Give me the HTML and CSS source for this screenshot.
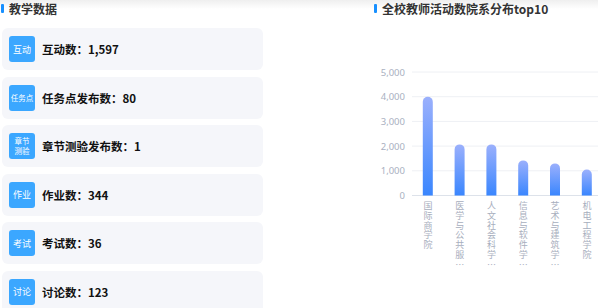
FILE: index.html
```html
<!DOCTYPE html>
<html lang="zh-CN">

<head>
    <meta charset="UTF-8">
    <meta name="viewport" content="width=device-width, initial-scale=1.0">
    <title>教学数据</title>
    <link rel="stylesheet" href="styles.css">
</head>

<body>
    <div class="page">
        <!-- 教学数据 -->
        <div class="left-panel">
            <div class="panel-title">教学数据</div>
            <div class="stat-list">
                <div class="stat-card">
                    <div class="stat-icon">互动</div>
                    <div class="stat-label">互动数：1,597</div>
                </div>
                <div class="stat-card">
                    <div class="stat-icon small">任务点</div>
                    <div class="stat-label">任务点发布数：80</div>
                </div>
                <div class="stat-card">
                    <div class="stat-icon two-line">章节<br>测验</div>
                    <div class="stat-label">章节测验发布数：1</div>
                </div>
                <div class="stat-card">
                    <div class="stat-icon">作业</div>
                    <div class="stat-label">作业数：344</div>
                </div>
                <div class="stat-card">
                    <div class="stat-icon">考试</div>
                    <div class="stat-label">考试数：36</div>
                </div>
                <div class="stat-card">
                    <div class="stat-icon">讨论</div>
                    <div class="stat-label">讨论数：123</div>
                </div>
            </div>
        </div>

        <!-- 院系分布 -->
        <div class="right-panel">
            <div class="panel-title">全校教师活动数院系分布top10</div>
            <svg class="chart" width="240" height="181" viewBox="0 0 240 181">
                <defs>
                    <linearGradient id="barFill" x1="0" y1="0" x2="0" y2="1">
                        <stop offset="0" stop-color="#9bb0fc"/>
                        <stop offset="1" stop-color="#3a86fe"/>
                    </linearGradient>
                </defs>
                <g class="grid">
                    <line x1="40" y1="52" x2="240" y2="52"/>
                    <line x1="40" y1="76.7" x2="240" y2="76.7"/>
                    <line x1="40" y1="101.4" x2="240" y2="101.4"/>
                    <line x1="40" y1="126.1" x2="240" y2="126.1"/>
                    <line x1="40" y1="150.8" x2="240" y2="150.8"/>
                </g>
                <line class="axis" x1="40" y1="175.5" x2="240" y2="175.5"/>
                <g class="y-labels">
                    <text x="33" y="55.5">5,000</text>
                    <text x="33" y="80.2">4,000</text>
                    <text x="33" y="104.9">3,000</text>
                    <text x="33" y="129.6">2,000</text>
                    <text x="33" y="154.3">1,000</text>
                    <text x="33" y="179">0</text>
                </g>
                <g class="bars">
                    <path d="M50.8 175.5 V81.7 A5 5 0 0 1 60.8 81.7 V175.5 Z"/>
                    <path d="M82.6 175.5 V129.4 A5 5 0 0 1 92.6 129.4 V175.5 Z"/>
                    <path d="M114.4 175.5 V129.4 A5 5 0 0 1 124.4 129.4 V175.5 Z"/>
                    <path d="M146.2 175.5 V145.4 A5 5 0 0 1 156.2 145.4 V175.5 Z"/>
                    <path d="M178 175.5 V148.4 A5 5 0 0 1 188 148.4 V175.5 Z"/>
                    <path d="M209.8 175.5 V154.6 A5 5 0 0 1 219.8 154.6 V175.5 Z"/>
                </g>
            </svg>
            <div class="x-labels">
                <div class="x-label"><span>国</span><span>际</span><span>商</span><span>学</span><span>院</span></div>
                <div class="x-label"><span>医</span><span>学</span><span>与</span><span>公</span><span>共</span><span>服</span><span>…</span></div>
                <div class="x-label"><span>人</span><span>文</span><span>社</span><span>会</span><span>科</span><span>学</span><span>…</span></div>
                <div class="x-label"><span>信</span><span>息</span><span>与</span><span>软</span><span>件</span><span>学</span><span>…</span></div>
                <div class="x-label"><span>艺</span><span>术</span><span>与</span><span>建</span><span>筑</span><span>学</span><span>…</span></div>
                <div class="x-label"><span>机</span><span>电</span><span>工</span><span>程</span><span>学</span><span>院</span></div>
            </div>
        </div>
    </div>
</body>

</html>
```

FILE: styles.css
```css
body {
    margin: 0;
    padding: 0;
    font-family: "Noto Sans CJK SC", "Noto Sans", sans-serif;
    background: linear-gradient(to bottom, #efefef 0, #ffffff 9px) no-repeat;
    background-color: #fff;
    color: #1a1a1a;
    overflow: hidden;
}

.page {
    display: flex;
    height: 308px;
}

.left-panel {
    width: 262px;
    padding-left: 1px;
}

.right-panel {
    margin-left: 111px;
    flex: 1;
    overflow: hidden;
}

/* section title with blue marker */
.panel-title {
    display: flex;
    align-items: center;
    gap: 5px;
    height: 16px;
    line-height: 17px;
    font-size: 12px;
    font-weight: bold;
    color: #333;
}

.panel-title::before {
    content: "";
    width: 3px;
    height: 9px;
    border-radius: 1px;
    background-color: #1890ff;
}

.stat-list {
    display: flex;
    flex-direction: column;
    gap: 6.5px;
    margin-top: 12px;
    padding-left: 1px;
}

.stat-card {
    display: flex;
    align-items: center;
    gap: 7px;
    height: 42px;
    padding-left: 7px;
    background-color: #f5f6fa;
    border-radius: 6px;
}

.stat-icon {
    width: 26px;
    height: 26px;
    border-radius: 3px;
    background-color: #3ba7ff;
    color: #fff;
    font-size: 9px;
    display: flex;
    align-items: center;
    justify-content: center;
    text-align: center;
    flex-shrink: 0;
}

.stat-icon.small {
    font-size: 7.5px;
}

.stat-icon.two-line {
    font-size: 7.5px;
    line-height: 10px;
}

.stat-label {
    font-size: 11.5px;
    font-weight: bold;
    color: #111;
}

/* chart */
.chart {
    display: block;
    margin-top: 4px;
    margin-left: -2px;
}

.chart .grid line {
    stroke: #eef0f4;
    stroke-width: 1;
}

.chart .axis {
    stroke: #dde2ea;
    stroke-width: 1;
}

.chart .y-labels text {
    font-family: "Noto Sans", sans-serif;
    font-size: 9.5px;
    fill: #a9b0bf;
    text-anchor: end;
}

.chart .bars path {
    fill: url(#barFill);
}

/* category names, one character per line */
.x-labels {
    display: flex;
    margin-left: 38px;
}

.x-label {
    flex: 0 0 31.8px;
    display: flex;
    flex-direction: column;
    align-items: center;
}

.x-label span {
    display: block;
    font-size: 9px;
    line-height: 9.8px;
    color: #a7aebd;
}
```
